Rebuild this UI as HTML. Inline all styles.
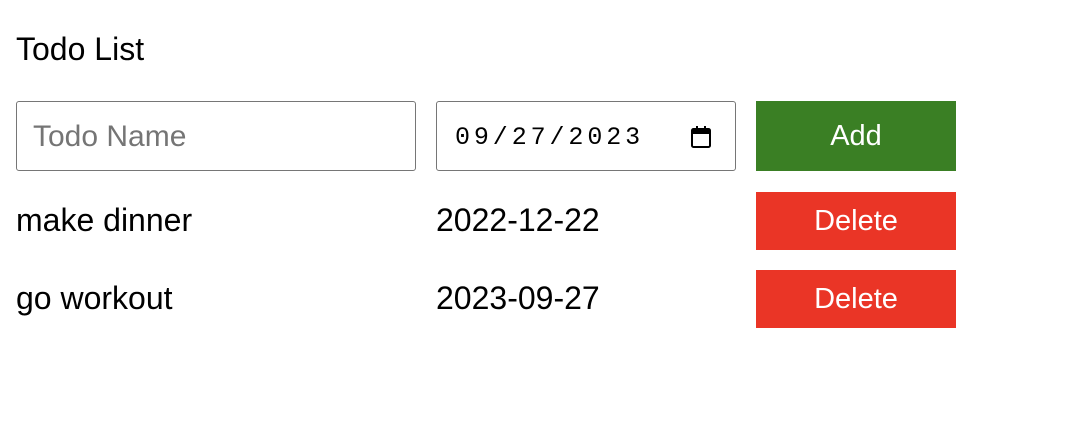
<!DOCTYPE html>
<html><head><style>
body{margin:0;width:1072px;height:438px;background:#fff;font-family:"Liberation Sans",Arial,sans-serif;position:relative;overflow:hidden}
.a{position:absolute}
.t{font-size:32px;color:#000;line-height:1}
.box{position:absolute;border:1px solid #767676;border-radius:3px;box-sizing:border-box;height:70px;top:101px}
.btn{position:absolute;left:756px;width:200px;color:#fff;font-size:29px;display:flex;align-items:center;justify-content:center}
</style></head><body>
<div class="a t" style="left:16px;top:33px">Todo List</div>
<div class="box" style="left:16px;width:400px"><span class="a" style="left:16px;top:18px;font-size:30px;color:#757575">Todo Name</span></div>
<div class="box" style="left:436px;width:300px"><span class="a" style="left:18px;top:21px;font-size:25px;font-family:'Liberation Mono',monospace;letter-spacing:3.9px;color:#000">09/27/2023</span>
<svg class="a" style="left:253px;top:23px" width="22" height="24" viewBox="0 0 22 24"><rect x="2" y="4" width="18" height="18" rx="1.5" fill="none" stroke="#000" stroke-width="2"/><rect x="2" y="4" width="18" height="5" fill="#000"/><rect x="6" y="1" width="2" height="5" fill="#000"/><rect x="14" y="1" width="2" height="5" fill="#000"/></svg></div>
<div class="btn" style="top:101px;height:70px;background:#3a7f24">Add</div>
<div class="a t" style="left:16px;top:204px">make dinner</div>
<div class="a t" style="left:436px;top:204px">2022-12-22</div>
<div class="btn" style="top:192px;height:58px;background:#ea3526">Delete</div>
<div class="a t" style="left:16px;top:282px">go workout</div>
<div class="a t" style="left:436px;top:282px">2023-09-27</div>
<div class="btn" style="top:270px;height:58px;background:#ea3526">Delete</div>
</body></html>
